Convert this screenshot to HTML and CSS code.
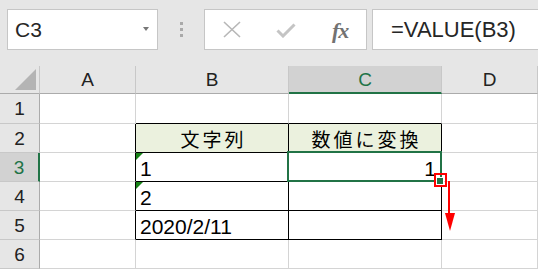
FILE: index.html
```html
<!DOCTYPE html>
<html lang="ja">
<head>
    <meta charset="UTF-8">
    <meta name="viewport" content="width=device-width, initial-scale=1.0">
    <title>VALUE</title>
    <link rel="stylesheet" href="styles.css">
</head>
<body>
    <!-- Formula bar -->
    <div class="formula-bar">
        <div class="name-box">
            <span class="name">C3</span>
            <span class="caret"></span>
        </div>
        <div class="grip"><i></i><i></i><i></i></div>
        <div class="buttons">
            <svg class="icon-x" width="18" height="17" viewBox="0 0 18 17">
                <path d="M1 1 L17 16 M17 1 L1 16" stroke="#b7b7b7" stroke-width="1.6" fill="none"/>
            </svg>
            <svg class="icon-check" width="20" height="15" viewBox="0 0 20 15">
                <path d="M1.5 7.5 L7 13 L18.5 1.5" stroke="#c4c4c4" stroke-width="3" fill="none"/>
            </svg>
            <span class="fx">fx</span>
        </div>
        <div class="formula">=VALUE(B3)</div>
    </div>

    <!-- Sheet -->
    <div class="sheet">
        <div class="cell hd corner"></div>
        <div class="cell hd">A</div>
        <div class="cell hd">B</div>
        <div class="cell hd on">C</div>
        <div class="cell hd">D</div>

        <div class="cell rh">1</div>
        <div class="cell"></div>
        <div class="cell bb"></div>
        <div class="cell bb"></div>
        <div class="cell"></div>

        <div class="cell rh">2</div>
        <div class="cell br"></div>
        <div class="cell title bb br">文字列</div>
        <div class="cell title bb br">数値に変換</div>
        <div class="cell"></div>

        <div class="cell rh on">3</div>
        <div class="cell br"></div>
        <div class="cell bb br flag">1</div>
        <div class="cell bb br num active">
            1
            <span class="handle"></span>
            <span class="mark"></span>
            <svg class="arrow" width="12" height="52" viewBox="0 0 12 52">
                <path d="M5 0 V34" stroke="#ff0000" stroke-width="2"/>
                <path d="M1 32 H11 L6 50 Z" fill="#ff0000"/>
            </svg>
        </div>
        <div class="cell"></div>

        <div class="cell rh">4</div>
        <div class="cell br"></div>
        <div class="cell bb br flag">2</div>
        <div class="cell bb br"></div>
        <div class="cell"></div>

        <div class="cell rh">5</div>
        <div class="cell br"></div>
        <div class="cell bb br">2020/2/11</div>
        <div class="cell bb br"></div>
        <div class="cell"></div>

        <div class="cell rh">6</div>
        <div class="cell"></div>
        <div class="cell"></div>
        <div class="cell"></div>
        <div class="cell"></div>
    </div>
</body>
</html>
```

FILE: styles.css
```css
body {
    margin: 0;
    padding: 0;
    width: 538px;
    height: 269px;
    overflow: hidden;
    background-color: #e6e6e6;
    font-family: "Liberation Sans", "Noto Sans CJK JP", sans-serif;
    color: #000;
}

/* Formula bar */
.formula-bar {
    display: flex;
    align-items: flex-start;
    height: 66px;
    padding: 9px 0 0 7px;
    box-sizing: border-box;
}
.name-box,
.buttons,
.formula {
    height: 41px;
    box-sizing: border-box;
    background-color: #fff;
    border: 1px solid #c6c6c6;
    display: flex;
    align-items: center;
}
.name-box {
    width: 151px;
    padding: 0 8px 0 7px;
    justify-content: space-between;
}
.name {
    font-size: 21px;
    color: #262626;
    padding-top: 1px;
}
.caret {
    width: 0;
    height: 0;
    border-left: 3.5px solid transparent;
    border-right: 3.5px solid transparent;
    border-top: 4px solid #777;
    margin-top: -2px;
}
.grip {
    width: 46px;
    height: 41px;
    display: flex;
    flex-direction: column;
    align-items: center;
    justify-content: center;
    gap: 3px;
}
.grip i {
    display: block;
    width: 3px;
    height: 3px;
    background-color: #a9a9a9;
}
.buttons {
    width: 163px;
    padding-left: 18px;
}
.icon-check {
    margin-left: 35px;
    margin-top: 2px;
}
.fx {
    margin-left: 36px;
    font-family: "Liberation Serif", serif;
    font-style: italic;
    font-weight: bold;
    font-size: 22px;
    color: #727272;
    letter-spacing: -1px;
    margin-top: 2px;
}
.formula {
    flex: 1;
    margin-left: 5px;
    margin-right: -2px;
    padding-left: 18px;
    font-size: 22px;
    color: #262626;
}

/* Sheet */
.sheet {
    display: grid;
    grid-template-columns: 40px 96px 153px 153px 96px;
    grid-template-rows: 28px 30px repeat(5, 29px);
    background-color: #fff;
}
.cell {
    box-sizing: border-box;
    border-right: 1px solid #d4d4d4;
    border-bottom: 1px solid #d4d4d4;
    display: flex;
    align-items: center;
    padding: 3px 4px 0;
    font-size: 21px;
    white-space: nowrap;
}
.hd,
.rh {
    background-color: #e6e6e6;
    justify-content: center;
    font-size: 19px;
    color: #222;
    padding: 1px 0 0;
}
.hd {
    border-right-color: #c8c8c8;
    border-bottom-color: #ababab;
}
.rh {
    border-right-color: #ababab;
    border-bottom-color: #c8c8c8;
}
.hd.on,
.rh.on {
    background-color: #d2d2d2;
    color: #217346;
}
.hd.on {
    border-bottom: 2px solid #217346;
}
.rh.on {
    border-right: 2px solid #217346;
}
.corner {
    position: relative;
}
.corner::after {
    content: '';
    position: absolute;
    right: 3px;
    bottom: 3px;
    width: 21px;
    height: 21px;
    background-color: #b4b4b4;
    clip-path: polygon(100% 0, 100% 100%, 0 100%);
}

/* Table */
.bb {
    border-bottom-color: #000;
}
.br {
    border-right-color: #000;
}
.title {
    background-color: #ebf1de;
    justify-content: center;
    font-size: 19px;
    letter-spacing: 3px;
    padding: 0 0 0 3px;
}
.num {
    justify-content: flex-end;
    padding-right: 5px;
}
.flag {
    position: relative;
}
.flag::before {
    content: '';
    position: absolute;
    left: 0;
    top: 0;
    width: 7px;
    height: 7px;
    background-color: #178217;
    clip-path: polygon(0 0, 100% 0, 0 100%);
}

/* Active cell */
.active {
    position: relative;
}
.active::before {
    content: '';
    position: absolute;
    inset: -2px -1px -1px -2px;
    border: 2px solid #217346;
}
.handle {
    position: absolute;
    left: 148px;
    top: 25px;
    width: 6px;
    height: 6px;
    background-color: #217346;
    outline: 1px solid #fff;
}
.mark {
    position: absolute;
    left: 145px;
    top: 20px;
    width: 13px;
    height: 14px;
    box-sizing: border-box;
    border: 2px solid #ff0000;
}
.arrow {
    position: absolute;
    left: 155px;
    top: 28px;
}
```
